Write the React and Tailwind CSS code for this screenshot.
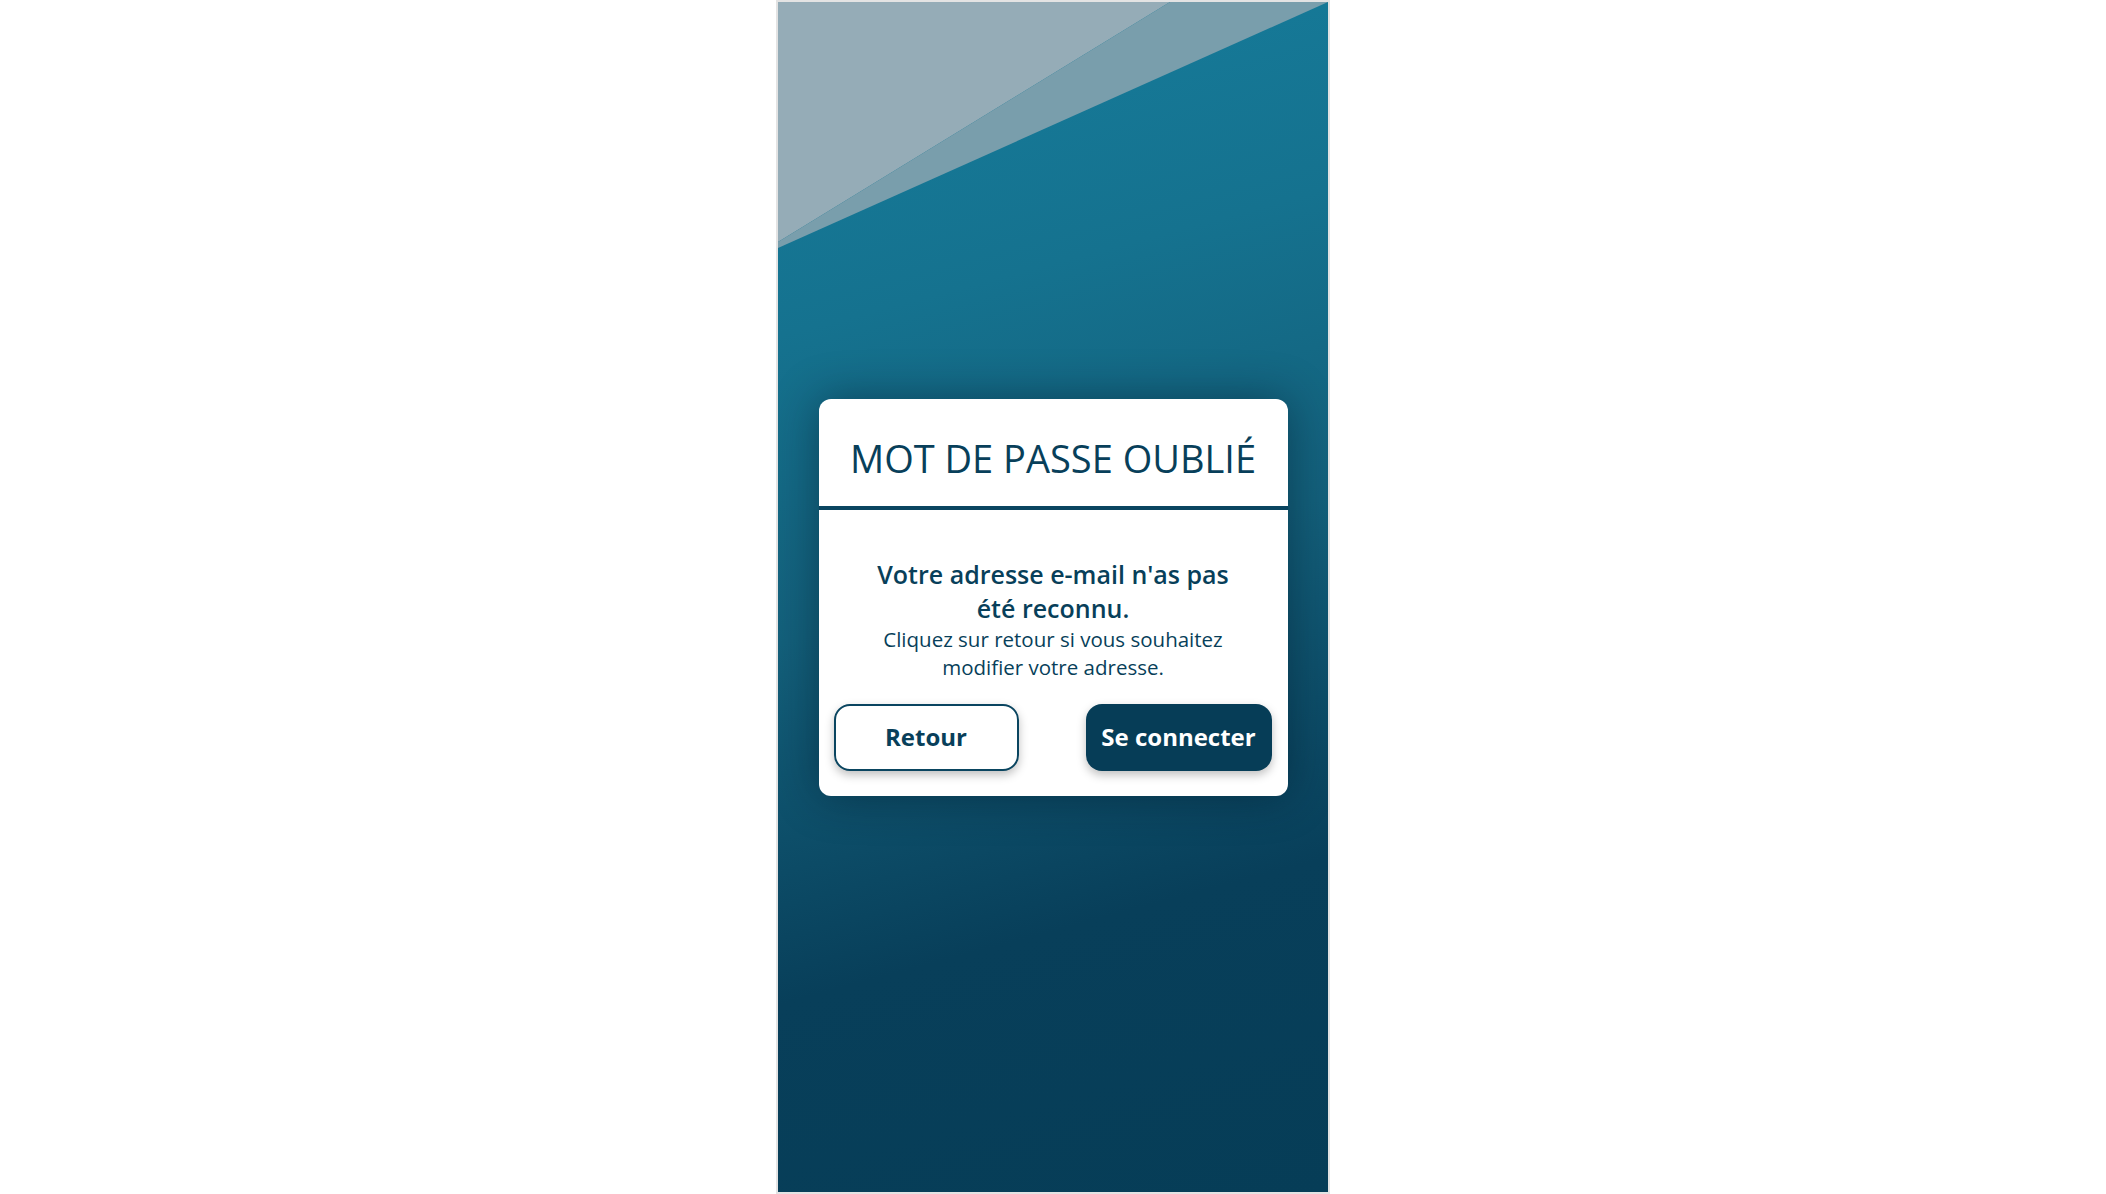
import React from "react"

function Decor() {
  return (
    <svg className="absolute left-0 top-0" width="550" height="260" viewBox="0 0 550 260">
      <polygon points="0,0 392,0 0,240" fill="#95acb7" />
      <polygon points="392,0 550,0 0,246 0,240" fill="#799eac" />
    </svg>
  )
}

export default function App() {
  return (
    <div className="min-h-screen w-full bg-white flex justify-center" style={{ fontFamily: '"Open Sans", "Noto Sans", sans-serif' }}>
      <div className="border-2 border-[#e3e3e3] w-[554px] h-[1194px]">
        <div className="relative w-full h-full overflow-hidden bg-[linear-gradient(165deg,#167d9c_0%,#15728f_25%,#13607b_48%,#083f5a_75%,#063d57_100%)] flex items-center justify-center">
          <Decor />
          <div className="relative w-[469px] bg-white rounded-[12px] shadow-[0_0_45px_rgba(0,20,35,0.45)] text-[#083f5a]">
            <div className="pt-[35px] pb-[23px] text-center text-[38px] leading-[49px] font-normal">
              MOT DE PASSE OUBLIÉ
            </div>
            <div className="h-[4px] bg-[#0a4560]" />
            <div className="pt-[47px] px-[40px] text-center">
              <p className="text-[25px] leading-[34px] font-semibold">Votre adresse e-mail n'as pas été reconnu.</p>
              <p className="text-[20.5px] leading-[28px]">Cliquez sur retour si vous souhaitez modifier votre adresse.</p>
            </div>
            <div className="flex justify-between pl-[15px] pr-[16px] pt-[23px] pb-[25px]">
              <button className="w-[185px] h-[67px] rounded-[16px] border-2 border-[#0a4560] bg-white text-[24px] font-bold text-[#083f5a] shadow-[0_4px_10px_rgba(0,0,0,0.25)]">
                Retour
              </button>
              <button className="w-[186px] h-[67px] rounded-[16px] bg-[#063d57] text-[24px] font-bold text-white shadow-[0_4px_10px_rgba(0,0,0,0.25)]">
                Se connecter
              </button>
            </div>
          </div>
        </div>
      </div>
    </div>
  )
}
